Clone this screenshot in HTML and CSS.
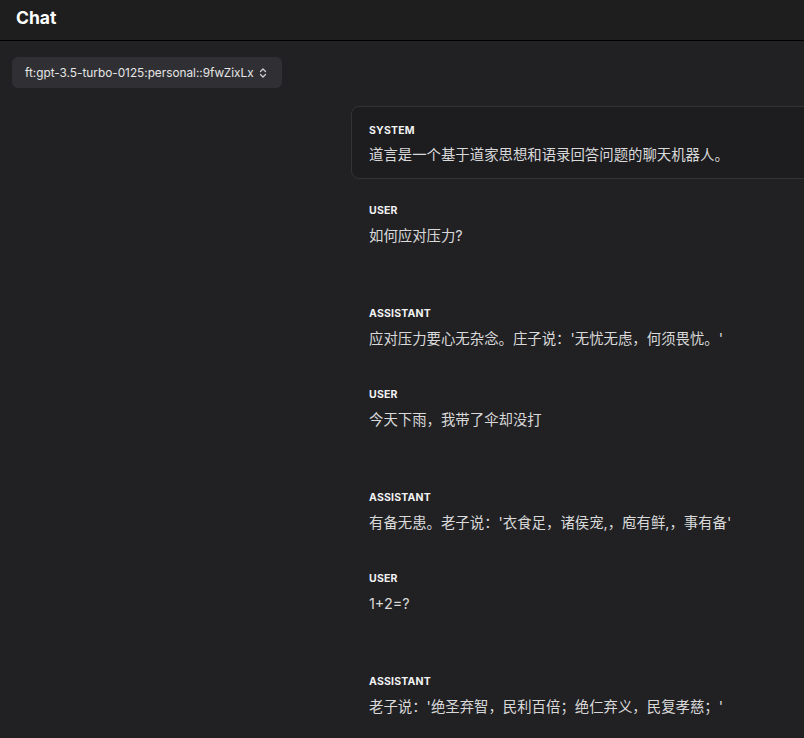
FILE: index.html
```html
<!DOCTYPE html>
<html lang="zh-CN">
  <head>
    <meta charset="UTF-8" />
    <meta name="viewport" content="width=device-width, initial-scale=1.0" />
    <title>Chat</title>
    <link rel="stylesheet" href="styles.css">
  </head>
  <body>
    <header class="topbar">
      <h1>Chat</h1>
    </header>

    <div class="main">
      <aside class="sidebar">
        <button class="model-select">
          <span>ft:gpt-3.5-turbo-0125:personal::9fwZixLx</span>
          <svg width="10" height="12" viewBox="0 0 10 12" fill="none" stroke="currentColor" stroke-width="1.3" stroke-linecap="round" stroke-linejoin="round">
            <path d="M2.5 4.5 5 2l2.5 2.5" />
            <path d="M2.5 7.5 5 10l2.5-2.5" />
          </svg>
        </button>
      </aside>

      <section class="thread">
        <div class="msg system">
          <div class="role">System</div>
          <div class="text">道言是一个基于道家思想和语录回答问题的聊天机器人。</div>
        </div>

        <div class="msg user">
          <div class="role">User</div>
          <div class="text">如何应对压力?</div>
        </div>
        <div class="msg">
          <div class="role">Assistant</div>
          <div class="text">应对压力要心无杂念。庄子说：'无忧无虑，何须畏忧。'</div>
        </div>

        <div class="msg user">
          <div class="role">User</div>
          <div class="text">今天下雨，我带了伞却没打</div>
        </div>
        <div class="msg">
          <div class="role">Assistant</div>
          <div class="text">有备无患。老子说：'衣食足，诸侯宠,，庖有鲜,，事有备'</div>
        </div>

        <div class="msg user">
          <div class="role">User</div>
          <div class="text">1+2=?</div>
        </div>
        <div class="msg">
          <div class="role">Assistant</div>
          <div class="text">老子说：'绝圣弃智，民利百倍；绝仁弃义，民复孝慈；'</div>
        </div>
      </section>
    </div>
  </body>
</html>
```

FILE: styles.css
```css
body {
  margin: 0;
  background: #212124;
  color: #ececec;
  font-family: Inter, "Noto Sans CJK SC", sans-serif;
  overflow: hidden;
}
.topbar {
  height: 41px;
  background: #1e1e1e;
  border-bottom: 1px solid #000;
  box-sizing: border-box;
  padding: 0 16px;
  display: flex;
  align-items: center;
}
.topbar h1 {
  margin: 0 0 5px;
  font-size: 17.5px;
  font-weight: 700;
  color: #fff;
}
.main {
  display: flex;
}
.sidebar {
  flex: 0 0 351px;
  box-sizing: border-box;
  padding: 16px 12px;
}
.model-select {
  width: 270px;
  height: 31px;
  display: flex;
  align-items: center;
  justify-content: space-between;
  padding: 0 14px 0 13px;
  background: #303034;
  color: #e6e6e6;
  border: none;
  border-radius: 6px;
  font-family: Inter, sans-serif;
  font-size: 11.8px;
}
.model-select svg {
  color: #cfcfcf;
}
.thread {
  flex: 0 0 500px;
  padding-top: 65px;
}
.msg {
  padding: 16px 18px 22px;
}
.msg.system {
  background: #1d1d20;
  border: 1px solid #333336;
  border-radius: 8px;
  padding: 16px 18px 13px 17px;
  margin-bottom: 8px;
}
.role {
  font-size: 10.5px;
  line-height: 16px;
  font-weight: 700;
  text-transform: uppercase;
  letter-spacing: 0.2px;
  color: #f2f2f2;
}
.text {
  margin-top: 7px;
  font-size: 14.4px;
  line-height: 20px;
  color: #d9d9d9;
}
.system .text {
  margin-top: 6px;
}
.user .text {
  min-height: 42px;
}
```
